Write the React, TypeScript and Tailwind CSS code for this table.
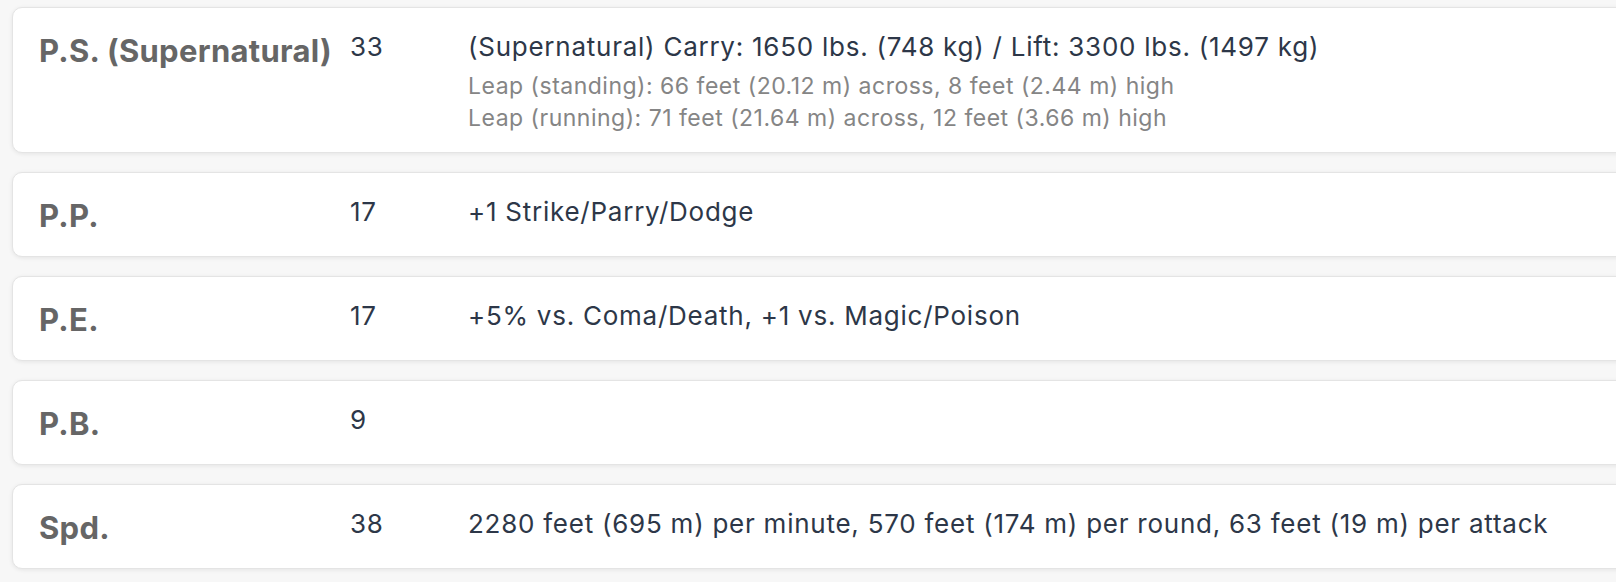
import React from 'react';

type Stat = {
  name: string;
  value: string;
  text?: string;
  notes?: string[];
};

const stats: Stat[] = [
  {
    name: 'P.S. (Supernatural)',
    value: '33',
    text: '(Supernatural) Carry: 1650 lbs. (748 kg) / Lift: 3300 lbs. (1497 kg)',
    notes: [
      'Leap (standing): 66 feet (20.12 m) across, 8 feet (2.44 m) high',
      'Leap (running): 71 feet (21.64 m) across, 12 feet (3.66 m) high',
    ],
  },
  { name: 'P.P.', value: '17', text: '+1 Strike/Parry/Dodge' },
  { name: 'P.E.', value: '17', text: '+5% vs. Coma/Death, +1 vs. Magic/Poison' },
  { name: 'P.B.', value: '9' },
  {
    name: 'Spd.',
    value: '38',
    text: '2280 feet (695 m) per minute, 570 feet (174 m) per round, 63 feet (19 m) per attack',
  },
];

export default function App() {
  return (
    <div
      className="min-h-screen w-full overflow-hidden bg-[#f7f7f7] pt-[7px] pl-[12px]"
      style={{ fontFamily: 'Inter, "Noto Sans", "Liberation Sans", sans-serif' }}
    >
      <div className="flex w-[1660px] flex-col gap-[19px]">
        {stats.map((s) => (
          <div
            key={s.name}
            className="flex items-start rounded-[10px] border border-[#e4e4e4] bg-white pt-[20px] pb-[18px] pl-[26px] shadow-[0_1px_4px_rgba(0,0,0,0.08)]"
          >
            {/* nome do atributo */}
            <div className="w-[311px] shrink-0 whitespace-nowrap text-[31px] leading-[45px] font-bold tracking-[0.3px] text-[#666666]">
              {s.name}
            </div>
            {/* valor */}
            <div className="w-[118px] shrink-0 text-[26px] leading-[37px] tracking-[0.75px] text-[#2d3748]">
              {s.value}
            </div>
            {/* descrição */}
            <div className="flex flex-col">
              <div className="min-h-[37px] whitespace-nowrap text-[26px] leading-[37px] tracking-[0.75px] text-[#2d3748]">
                {s.text}
              </div>
              {s.notes && (
                <div className="mt-[5px] flex flex-col">
                  {s.notes.map((n) => (
                    <div key={n} className="whitespace-nowrap text-[23px] leading-[32px] tracking-[0.5px] text-[#858585]">
                      {n}
                    </div>
                  ))}
                </div>
              )}
            </div>
          </div>
        ))}
      </div>
    </div>
  );
}
